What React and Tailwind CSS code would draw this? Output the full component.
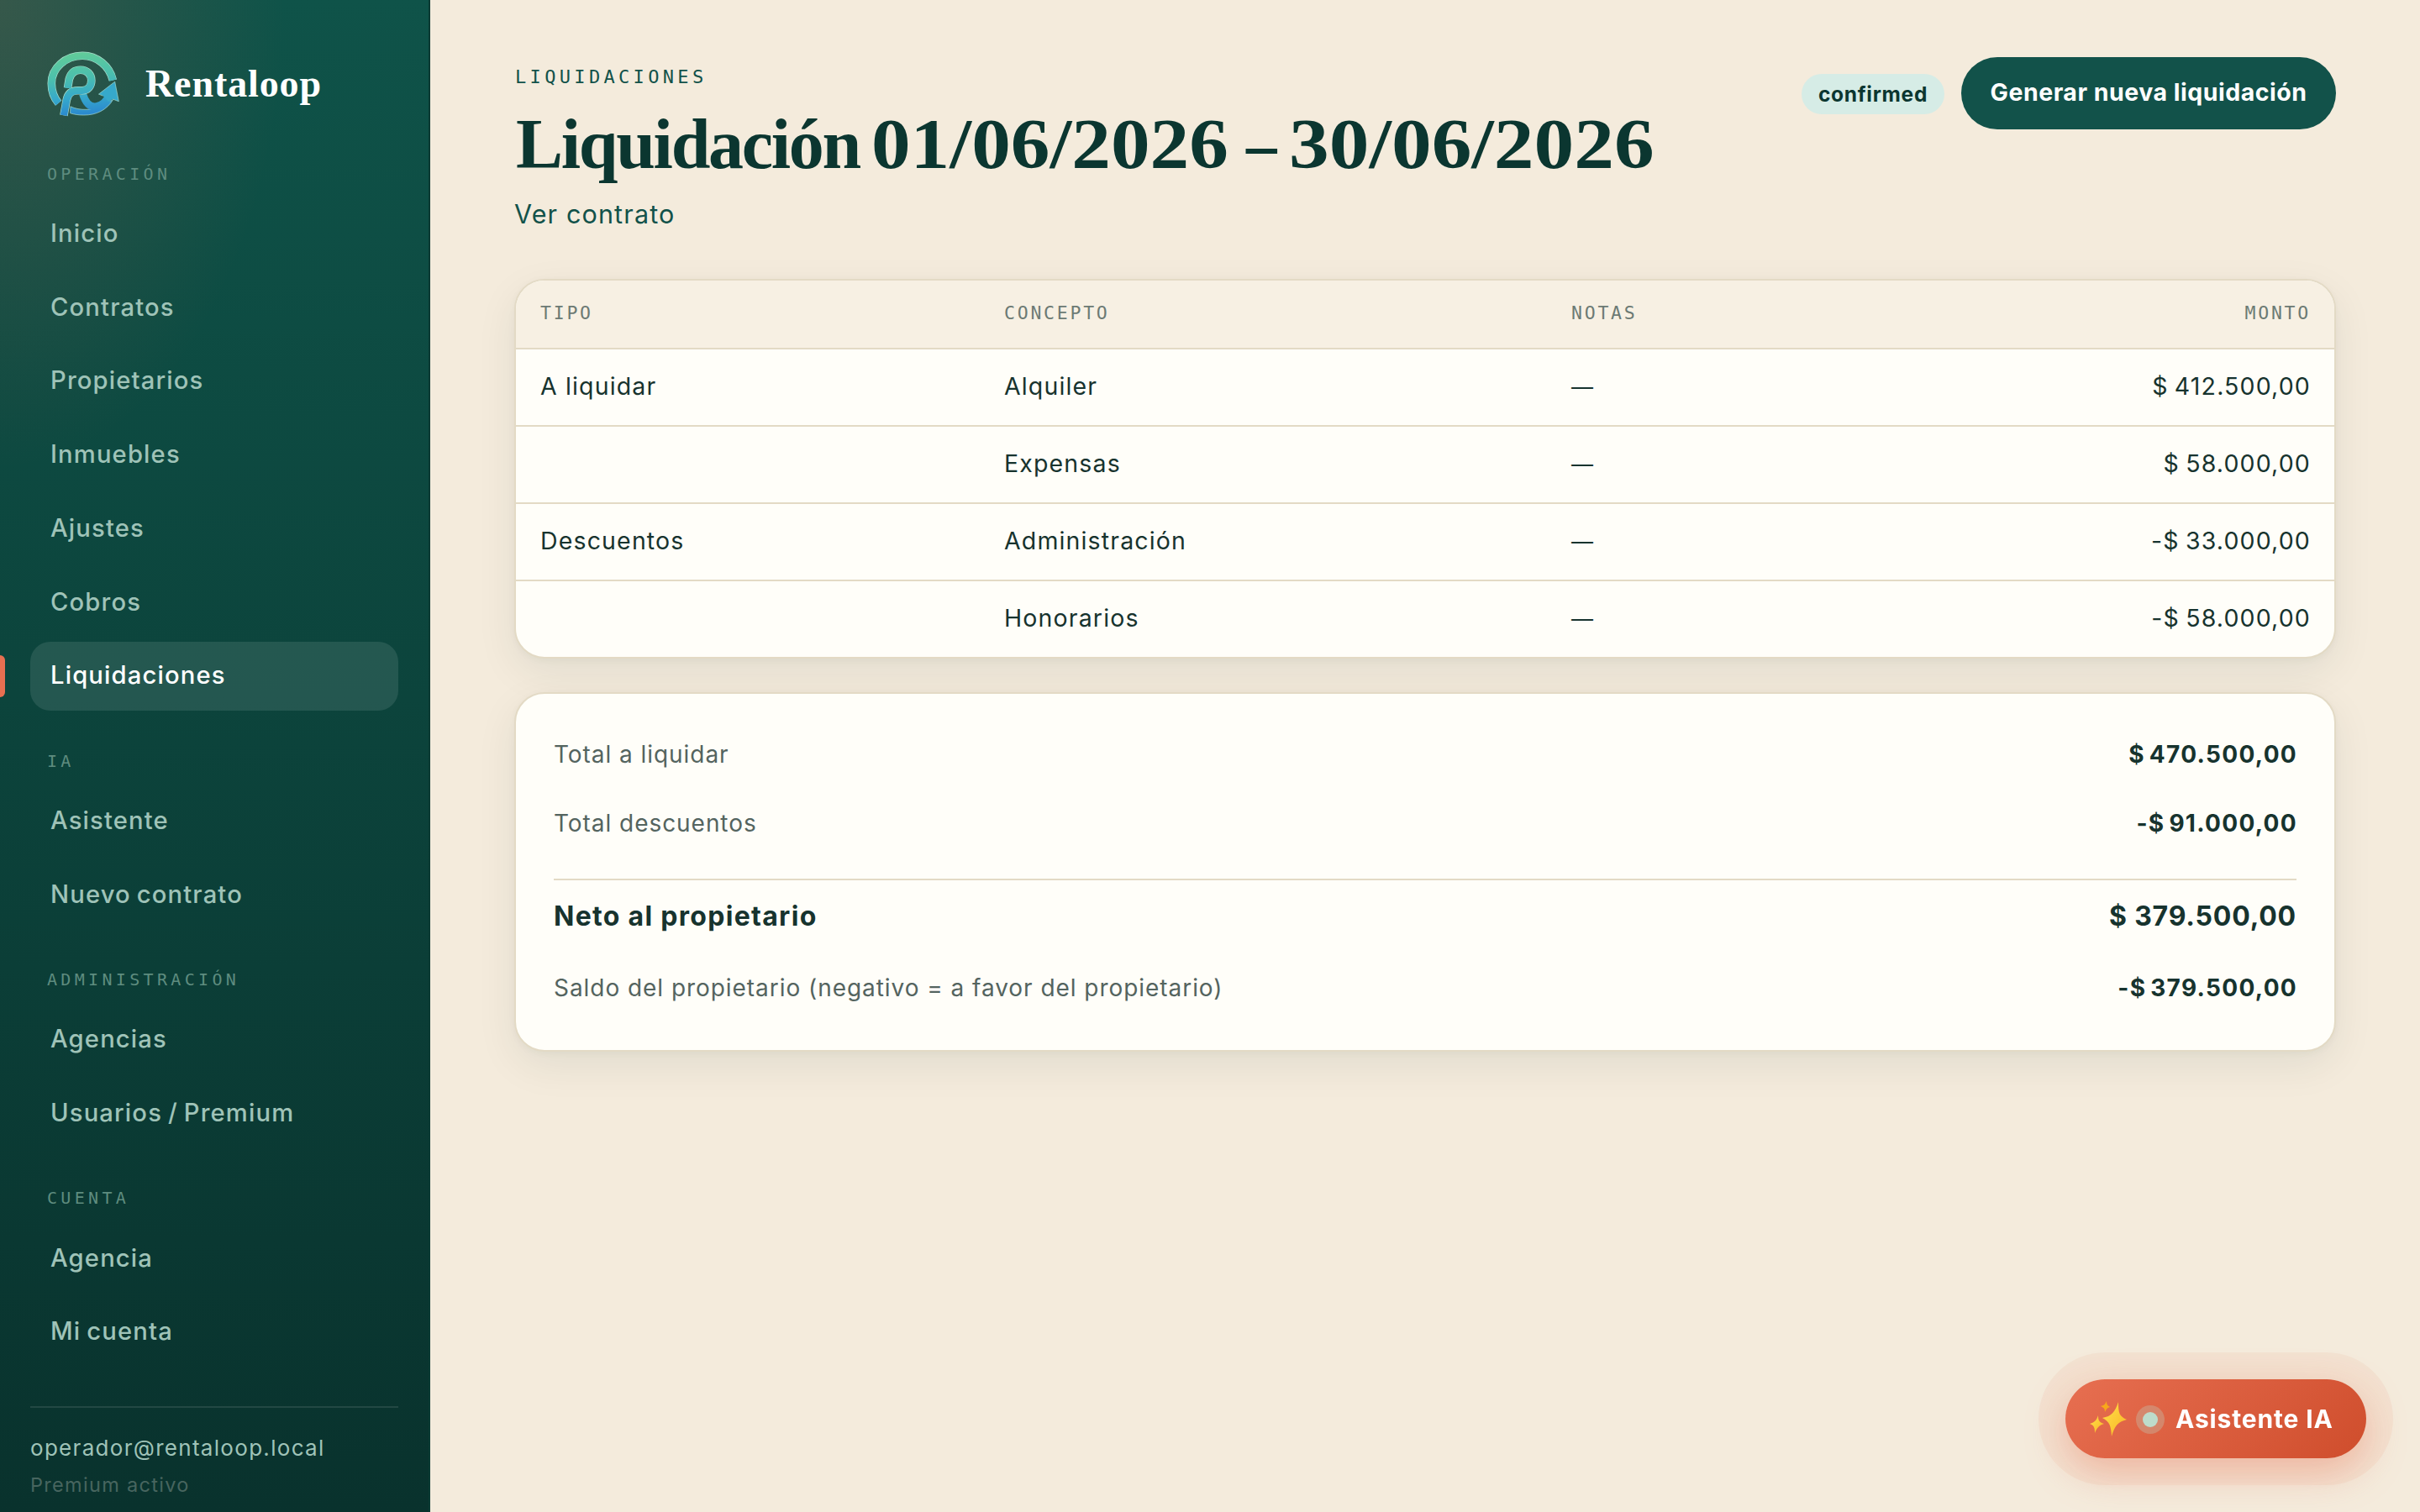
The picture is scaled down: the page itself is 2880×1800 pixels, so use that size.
import React from 'react';

const navGroups = [
    { title: 'Operación', items: ['Inicio', 'Contratos', 'Propietarios', 'Inmuebles', 'Ajustes', 'Cobros', 'Liquidaciones'] },
    { title: 'IA', items: ['Asistente', 'Nuevo contrato'] },
    { title: 'Administración', items: ['Agencias', 'Usuarios / Premium'] },
    { title: 'Cuenta', items: ['Agencia', 'Mi cuenta'] },
];

const rows = [
    { tipo: 'A liquidar', concepto: 'Alquiler', notas: '—', monto: '$ 412.500,00' },
    { tipo: '', concepto: 'Expensas', notas: '—', monto: '$ 58.000,00' },
    { tipo: 'Descuentos', concepto: 'Administración', notas: '—', monto: '-$ 33.000,00' },
    { tipo: '', concepto: 'Honorarios', notas: '—', monto: '-$ 58.000,00' },
];

const Logo = () => {
    const ring = 'M284 137 C272 86 227 49 175 49 C113 49 64 94 64 148 C64 176 73 200 89 219';
    const letter = 'M108 263 L118 208 C123 182 138 174 158 174 L174 174 C194 174 207 158 207 138 C207 116 191 100 168 100 C145 100 132 114 127 134 L122 165';
    const leg = 'M176 186 C186 218 202 236 226 231 C248 226 262 210 270 192';
    return (
        <svg viewBox="45 25 265 245" className="h-[82px] w-[88px] shrink-0" fill="none">
            <defs>
                <linearGradient id="loop" gradientUnits="userSpaceOnUse" x1="150" y1="35" x2="175" y2="265">
                    <stop offset="0" stopColor="#62cc98" />
                    <stop offset="0.4" stopColor="#4bbfae" />
                    <stop offset="0.7" stopColor="#36a9cb" />
                    <stop offset="1" stopColor="#2a86cf" />
                </linearGradient>
            </defs>
            <path d={ring} stroke="#a9dccb" strokeWidth="29" />
            <path d={ring} stroke="url(#loop)" strokeWidth="25" />
            <path d="M132 231 C165 247 215 246 250 225 L285 206 C262 244 225 262 180 262 C162 262 145 260 131 255 Z" fill="url(#loop)" stroke="#a9dccb" strokeWidth="2" />
            <path d={leg} stroke="url(#loop)" strokeWidth="27" />
            <path d="M233 187 L291 142 L305 213 L284 205 L268 214 L248 193 Z" fill="#36a9cb" />
            <path d="M248 193 L233 187 L291 142 L305 213 L284 205" stroke="#a9dccb" strokeWidth="2" />
            <path d={letter} stroke="#a9dccb" strokeWidth="29" />
            <path d={letter} stroke="url(#loop)" strokeWidth="25" />
        </svg>
    );
};

const Sparkles = () => (
    <svg viewBox="0 0 44 42" className="h-[42px] w-[44px] shrink-0">
        <defs>
            <linearGradient id="spark" x1="0" y1="0" x2="1" y2="1">
                <stop offset="0" stopColor="#ffe14a" />
                <stop offset="1" stopColor="#f9b425" />
            </linearGradient>
        </defs>
        <path d="M34 1 C34 14 35 18 44 22 C33 25 30 29 26 42 C25 29 24 25 15 20 C26 18 30 13 34 1 Z" fill="url(#spark)" />
        <path d="M10 17 C10 23 11 25 17 27 C11 29 9 31 6 38 C6 31 5 29 0 27 C6 25 8 23 10 17 Z" fill="url(#spark)" />
        <path d="M20 0 C20 4 21 5 24 7 C21 8 20 9 18 13 C18 9 17 8 13 6 C17 5 18 4 20 0 Z" fill="#f7a81b" />
    </svg>
);

function Sidebar() {
    return (
        <aside className="flex h-full w-[512px] shrink-0 flex-col border-r-2 border-[#0b3a33] bg-[radial-gradient(ellipse_340px_560px_at_0_0,rgba(231,111,81,0.18),transparent),linear-gradient(180deg,#0f5349_0%,#0c443c_46%,#09322d_100%)] pr-[36px] pl-[36px]">
            <div className="flex h-[191.5px] items-start gap-[30px] pt-[58px] pl-[19px]">
                <Logo />
                <span className="mt-[12px] font-['Liberation_Serif'] text-[46px] leading-[60px] font-bold tracking-[0.9px] text-white">Rentaloop</span>
            </div>
            {navGroups.map((group, i) => (
                <nav key={group.title} className={i > 0 ? 'mt-[44.8px]' : ''}>
                    <div className="mb-[16px] pl-[20px] font-['DejaVu_Sans_Mono'] text-[20px] leading-[30px] tracking-[4.33px] text-[#5e8c7f] uppercase">{group.title}</div>
                    <div className="flex flex-col gap-[6px]">
                        {group.items.map(item => {
                            const active = item === 'Liquidaciones';
                            return (
                                <a key={item} className={`relative flex h-[81.75px] items-center rounded-[24px] px-[24px] pb-px text-[29.2px] font-medium tracking-[1.15px] [word-spacing:-2px] ${active ? 'bg-white/10 text-white' : 'text-[#9fc3b8]'}`}>
                                    {active && <span className="absolute top-[16px] -left-[36px] h-[50px] w-[6px] rounded-r-[6px] bg-[#e76f51]" />}
                                    {item}
                                </a>
                            );
                        })}
                    </div>
                </nav>
            ))}
            <div className="mt-[47px] border-t-2 border-white/10 pt-[28px]">
                <div className="text-[26px] leading-[40px] tracking-[1.3px] text-[#9fc3b8]">operador@rentaloop.local</div>
                <div className="mt-[5px] text-[23.5px] leading-[38px] tracking-[1.3px] text-[#47655f]">Premium activo</div>
            </div>
        </aside>
    );
}

function TotalRow({ label, value }) {
    return (
        <div className="flex h-[82px] items-center justify-between text-[28px]">
            <span className="tracking-[0.95px] text-[#54645f]">{label}</span>
            <span className="-mr-px font-bold tracking-[1.3px] text-[#17332e] [word-spacing:-3px]">{value}</span>
        </div>
    );
}

function App() {
    const card = 'overflow-hidden rounded-[36px] border-2 border-[#e3dac5] bg-[#fffef9] shadow-[0_16px_48px_rgba(11,54,48,0.08),0_2px_8px_rgba(11,54,48,0.04)]';
    const columns = 'grid grid-cols-[552px_674px_1fr_auto] items-center';

    return (
        <div className="flex h-[1800px] w-[2880px] overflow-hidden bg-[#f4ebdc] font-['Inter',sans-serif] whitespace-nowrap">
            <Sidebar />
            <main className="flex-1 px-[100px]">
                <header className="flex h-[332px] items-start justify-between pt-[68px]">
                    <div>
                        <div className="pl-px font-['DejaVu_Sans_Mono'] text-[22px] leading-[48px] tracking-[4.33px] text-[#12524a]">LIQUIDACIONES</div>
                        <h1 className="mt-[6px] flex pl-[2px] font-['Liberation_Serif'] text-[84px] leading-[100px] font-bold text-[#0b3630]">
                            <span className="w-[423px] tracking-[-2.3px]">Liquidación</span>
                            <span className="w-[446px] origin-left scale-x-[1.11]">01/06/2026</span>
                            <span className="w-[51px] origin-left scale-x-[0.87]">–</span>
                            <span className="w-[382px] origin-left scale-x-[1.136]">30/06/2026</span>
                        </h1>
                        <a className="mt-[12px] block text-[30.5px] leading-[42px] tracking-[1.15px] text-[#12524a]">Ver contrato</a>
                    </div>
                    <div className="flex items-center gap-[20px]">
                        <span className="mt-[2px] flex h-[48px] w-[170px] items-center justify-center rounded-full bg-[#d6ece6] text-[24.5px] font-bold tracking-[0.7px] text-[#0b3630]">confirmed</span>
                        <button className="flex h-[86px] w-[446px] items-center justify-center rounded-full bg-[#12524a] pb-[2px] text-[28.5px] font-bold tracking-[0.5px] text-white">Generar nueva liquidación</button>
                    </div>
                </header>

                <section className={card}>
                    <div className={`${columns} h-[82px] border-b-2 border-[#e3dac5] bg-[#f7f0e3] pb-[2px] font-['DejaVu_Sans_Mono'] text-[21.5px] tracking-[2.75px] text-[#6c7a74]`}>
                        <span className="pl-[29px]">TIPO</span>
                        <span className="pl-[29px]">CONCEPTO</span>
                        <span className="pl-[30px]">NOTAS</span>
                        <span className="pr-[28px]">MONTO</span>
                    </div>
                    {rows.map(row => (
                        <div key={row.concepto} className={`${columns} h-[92px] border-b-2 border-[#e3dac5] pb-[2px] text-[28.5px] tracking-[1.15px] text-[#17332e] last:h-[90px] last:border-b-0`}>
                            <span className="pl-[29px]">{row.tipo}</span>
                            <span className="pl-[29px]">{row.concepto}</span>
                            <span className="pl-[30px] text-[26px]">{row.notas}</span>
                            <span className="pr-[28px] [word-spacing:-2px]">{row.monto}</span>
                        </div>
                    ))}
                </section>

                <section className={`${card} mt-[40px] h-[428px] px-[45px] pt-[31px]`}>
                    <TotalRow label="Total a liquidar" value="$ 470.500,00" />
                    <TotalRow label="Total descuentos" value="-$ 91.000,00" />
                    <div className="mt-[25px] flex h-[89px] items-center justify-between border-t-2 border-[#e3dac5] pb-px text-[32px] font-bold text-[#17332e]">
                        <span className="tracking-[1.3px]">Neto al propietario</span>
                        <span className="tracking-[0.8px]">$ 379.500,00</span>
                    </div>
                    <TotalRow label="Saldo del propietario (negativo = a favor del propietario)" value="-$ 379.500,00" />
                </section>
            </main>

            <button className="fixed right-[64px] bottom-[64px] flex h-[94px] w-[358px] items-center rounded-full bg-[linear-gradient(135deg,#e76f51,#cf4d2c)] pl-[29px] text-white shadow-[0_0_0_32px_rgba(231,111,81,0.08),0_16px_48px_rgba(231,111,81,0.4)]">
                <Sparkles />
                <span className="mt-px ml-[19px] size-[18px] rounded-full bg-[#bddccb] shadow-[0_0_0_8px_rgba(189,220,203,0.3)]" />
                <span className="ml-[21px] text-[30px] font-bold tracking-[0.85px]">Asistente IA</span>
            </button>
        </div>
    );
}

export default App;
